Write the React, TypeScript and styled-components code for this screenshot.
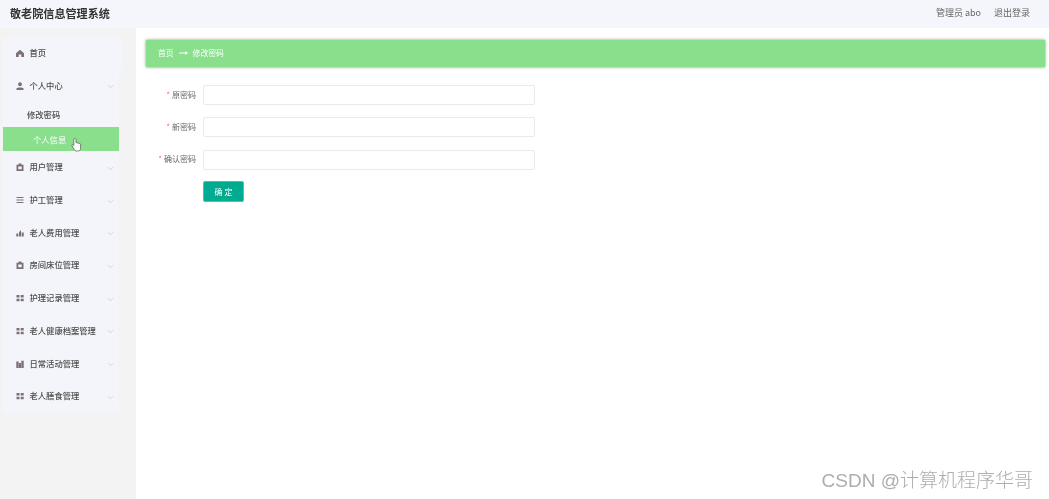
import React from "react";
import styled, { createGlobalStyle } from "styled-components";
import { ChevronDown } from "lucide-react";

const GlobalStyle = createGlobalStyle`
    html, body {
        margin: 0;
        padding: 0;
        background: #fff;
    }
    body {
        font-family: "Noto Sans CJK SC", "Liberation Sans", sans-serif;
    }
    * {
        box-sizing: border-box;
    }
`;

const menuList = [
    { name: "用户管理", icon: "bag" },
    { name: "护工管理", icon: "lines" },
    { name: "老人费用管理", icon: "chart" },
    { name: "房间床位管理", icon: "bag" },
    { name: "护理记录管理", icon: "grid" },
    { name: "老人健康档案管理", icon: "grid" },
    { name: "日常活动管理", icon: "bars" },
    { name: "老人膳食管理", icon: "grid" },
];

const fields = ["原密码", "新密码", "确认密码"];

/** 메뉴 아이콘 (채워진 형태) */
const MenuIcon = ({ type }: { type: string }) => {
    let shape = null;
    switch (type) {
        case "home":
            shape = <path d="M4 .8 8 4.300V8H5.300V5.600H2.700V8H0V4.300z" fill="currentColor" />;
            break;
        case "user":
            shape = <path d="M4 .3a2 2 0 0 1 0 4 2 2 0 0 1 0-4zM.5 6.200c1-1 6-1 7 0V8H.5z" fill="currentColor" />;
            break;
        case "lines":
            shape = <path d="M.5 1.500h7M.5 4h7M.5 6.500h7" stroke="currentColor" strokeWidth="1" fill="none" />;
            break;
        case "chart":
            shape = <path d="M.3 7.500V4.500h2v3zM3 7.500V3.200L5 1v6.500zM5.600 7.500V3.500h2.100v4z" fill="currentColor" />;
            break;
        case "grid":
            shape = <path d="M.5 1h3v2.500h-3zM4.700 1h3v2.500h-3zM.5 4.700h3v2.500h-3zM4.700 4.700h3v2.500h-3z" fill="currentColor" />;
            break;
        case "bars":
            shape = <path d="M.3 1.500h2.400V8H.3zM3 3h2v5H3zM5.300 .8h2.400V8H5.300z" fill="currentColor" />;
            break;
        default:
            shape = (
                <path
                    fillRule="evenodd"
                    d="M2.500.5h3v1.300h2V8H.5V1.800h2zM2.300 3.500v2.800h3.400V3.500z"
                    fill="currentColor"
                />
            );
    }
    return <svg viewBox="0 0 8 8" width="8" height="8">{shape}</svg>;
};

const App = () => {
    return (
        <Page>
            <GlobalStyle />
            <Header>
                <Logo>敬老院信息管理系统</Logo>
                <HeaderRight>
                    <span>管理员 abo</span>
                    <span>退出登录</span>
                </HeaderRight>
            </Header>
            <Body>
                <Sidebar>
                    <Menu>
                        <HomeRow>
                            <IconBox><MenuIcon type="home" /></IconBox>
                            <MenuName>首页</MenuName>
                        </HomeRow>
                        <MenuRow>
                            <IconBox><MenuIcon type="user" /></IconBox>
                            <MenuName>个人中心</MenuName>
                            <ChevronBox><ChevronDown size={9} strokeWidth={1.5} /></ChevronBox>
                        </MenuRow>
                        <SubRow>修改密码</SubRow>
                        <ActiveRow>
                            个人信息
                            <HandCursor viewBox="0 0 14 18" width="11" height="16">
                                <path
                                    d="M3.600 2c0-1.600 2.800-1.600 2.800 0v4.200c1.100-.6 1.800-.3 2 .5.900-.5 1.600-.2 1.800.6.900-.4 2-.1 2 1v4.700c0 2-1.200 3.600-2.800 3.600H6.600c-1.200 0-1.900-.7-2.500-1.700L1.300 10c-.6-1.100.7-2 1.600-1.100l.7.800z"
                                    fill="#fff"
                                    stroke="#444"
                                    strokeWidth="0.8"
                                />
                            </HandCursor>
                        </ActiveRow>
                        {menuList.map((i, idx) => (
                            <MenuRow key={idx}>
                                <IconBox><MenuIcon type={i.icon} /></IconBox>
                                <MenuName>{i.name}</MenuName>
                                <ChevronBox><ChevronDown size={9} strokeWidth={1.5} /></ChevronBox>
                            </MenuRow>
                        ))}
                    </Menu>
                </Sidebar>
                <Main>
                    <Breadcrumb>
                        <span>首页</span>
                        <Arrow viewBox="0 0 10 6" width="9" height="6">
                            <path d="M0 3h9M7 1.500l2 1.500-2 1.500" fill="none" stroke="#fff" strokeWidth="1.200" />
                        </Arrow>
                        <span>修改密码</span>
                    </Breadcrumb>
                    <Form>
                        {fields.map((f, idx) => (
                            <FormRow key={idx}>
                                <Label><Star>*</Star> {f}</Label>
                                <Input type="password" />
                            </FormRow>
                        ))}
                        <SubmitButton>确 定</SubmitButton>
                    </Form>
                </Main>
            </Body>
            <Watermark>CSDN @计算机程序华哥</Watermark>
        </Page>
    );
};
export default App;

const Page = styled.div`
    position: relative;
    display: flex;
    flex-direction: column;
    width: 1049px;
    height: 499px;
    overflow: hidden;
    filter: blur(0.45px);
`;

const Header = styled.div`
    display: flex;
    justify-content: space-between;
    align-items: center;
    height: 28px;
    padding: 0 19px 3px 10px;
    background-color: #f4f6fb;
`;
const Logo = styled.div`
    font-size: 11.1px;
    font-weight: 700;
    color: #333;
`;
const HeaderRight = styled.div`
    display: flex;
    gap: 13px;
    font-size: 9px;
    color: #666;
`;

const Body = styled.div`
    display: flex;
    flex: 1;
`;
const Sidebar = styled.div`
    width: 136px;
    padding: 8.6px 17px 0 3px;
    background-color: #f3f3f4;
`;
const Menu = styled.div`
    display: flex;
    flex-direction: column;
    background-color: #f4f5fb;
`;
const MenuRow = styled.div`
    display: flex;
    align-items: center;
    height: 32.7px;
    padding: 0 4px 0 13px;
`;
const HomeRow = styled(MenuRow)`
    margin-right: -4px;
    background-color: #f4f5fb;
`;
const IconBox = styled.span`
    display: flex;
    width: 13.5px;
    color: #7c7078;
`;
const MenuName = styled.span`
    flex: 1;
    padding-bottom: 2px;
    font-size: 8.3px;
    font-weight: 500;
    color: #4d4d4d;
`;
const ChevronBox = styled.span`
    display: flex;
    padding-top: 2px;
    color: #b9bbc2;
`;
const SubRow = styled.div`
    display: flex;
    align-items: center;
    height: 24.6px;
    padding-left: 24px;
    font-size: 8.3px;
    font-weight: 500;
    color: #4d4d4d;
`;
const ActiveRow = styled.div`
    position: relative;
    display: flex;
    align-items: center;
    height: 24.5px;
    padding-left: 30px;
    font-size: 8.3px;
    color: #fff;
    background-color: #89df8c;
`;
const HandCursor = styled.svg`
    position: absolute;
    left: 68px;
    top: 10px;
`;

const Main = styled.div`
    flex: 1;
    padding: 12px 4px 0 10px;
    background-color: #fff;
`;
const Breadcrumb = styled.div`
    display: flex;
    align-items: center;
    gap: 5px;
    height: 27px;
    padding: 0 0 2px 12px;
    font-size: 7.8px;
    color: #fff;
    background-color: #89df8c;
    box-shadow: 0 0 3px rgba(0, 0, 0, 0.45);
`;
const Arrow = styled.svg`
    display: block;
`;
const Form = styled.div`
    display: flex;
    flex-direction: column;
    gap: 12.3px;
    padding-top: 18px;
`;
const FormRow = styled.div`
    display: flex;
    align-items: center;
    height: 20px;
`;
const Label = styled.label`
    display: flex;
    justify-content: flex-end;
    gap: 2px;
    width: 57px;
    padding: 0 7px 2px 0;
    white-space: nowrap;
    font-size: 8px;
    color: #666;
`;
const Star = styled.span`
    color: #f56c6c;
`;
const Input = styled.input`
    width: 332px;
    height: 20px;
    border: 1px solid #e8eaec;
    border-radius: 2px;
    background: #fff;
    outline: none;
`;
const SubmitButton = styled.button`
    width: 41px;
    height: 21px;
    margin: -0.6px 0 0 57px;
    padding: 0;
    border: 1px solid #3fc9b0;
    border-radius: 2px;
    font-family: inherit;
    font-size: 8px;
    color: #fff;
    background-color: #00ab91;
`;
const Watermark = styled.div`
    position: absolute;
    right: 16px;
    bottom: 7px;
    font-family: "Liberation Sans", "Noto Sans CJK SC", sans-serif;
    font-size: 19px;
    font-weight: 300;
    color: #adadad;
    white-space: nowrap;
`;
